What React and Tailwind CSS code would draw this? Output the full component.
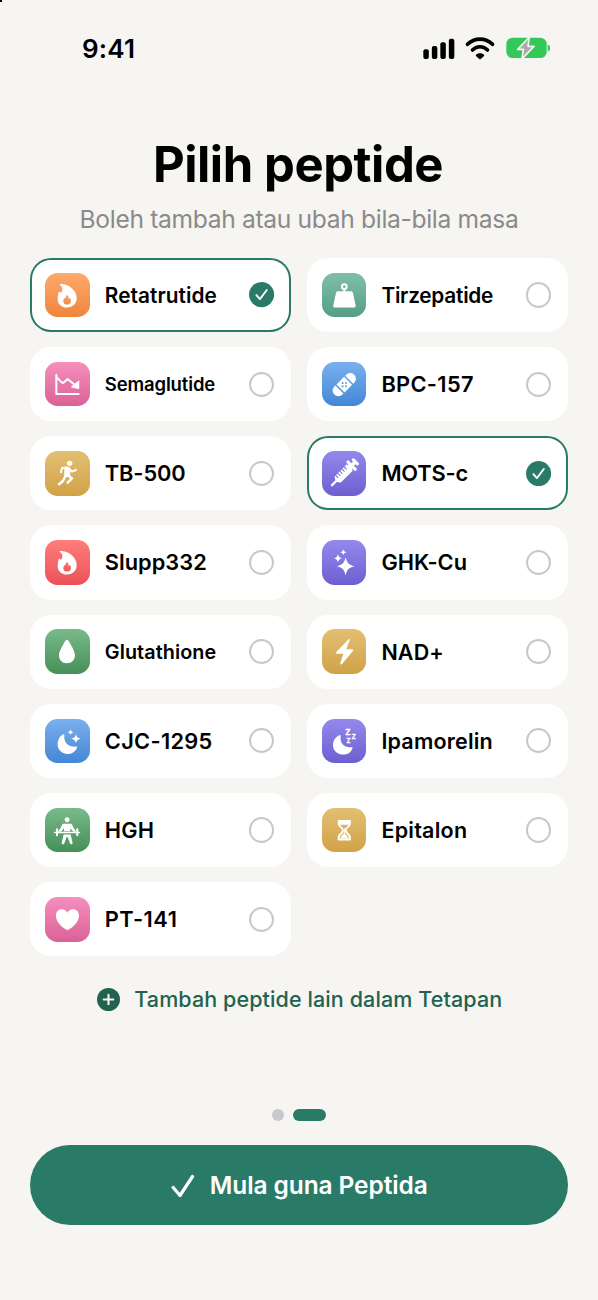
import React, { useState } from 'react';

const star = (cx, cy, r) => {
  const a = r * 0.18;
  const b = r * 0.33;
  return `M${cx} ${cy - r}C${cx + a} ${cy - b} ${cx + b} ${cy - a} ${cx + r} ${cy}C${cx + b} ${cy + a} ${cx + a} ${cy + b} ${cx} ${cy + r}C${cx - a} ${cy + b} ${cx - b} ${cy + a} ${cx - r} ${cy}C${cx - b} ${cy - a} ${cx - a} ${cy - b} ${cx} ${cy - r}Z`;
};

const Flame = () => (
  <path
    fillRule="evenodd"
    d="M46 33C63 32 79 41 88 54C94 63 96 71 95 80C93 95 81 104 66 104C50 104 38 94 38 79C38 70 40 63 41 58C42 55 45 56 48 60C55 51 53 42 45 35C44 34 44 33 46 33ZM64 65C67 75 55 74 55 84C55 91 59 95 66 95C73 95 78 91 78 84C78 79 76 76 74 74C73 77 72 78 70 78C73 72 69 67 64 65Z"
  />
);

const Weight = () => (
  <>
    <circle cx="67" cy="41" r="7" fill="none" stroke="currentColor" strokeWidth="6" />
    <path d="M64 47H70V55H86C90 55 92 57 93 60L101 97C102 101 99 104 95 104H39C35 104 33 101 34 97L42 60C43 57 45 55 49 55H64Z" />
  </>
);

const Chart = () => (
  <>
    <g fill="none" stroke="currentColor" strokeWidth="6" strokeLinecap="round" strokeLinejoin="round">
      <path d="M34 39V96H101" />
      <path d="M36 47L51 62C53 64 55 63 57 61L68 51L90 69" />
    </g>
    <path d="M100 56C102 55 103 56 103 58V78C103 80 102 81 100 81L80 77C78 76 78 74 80 73Z" />
  </>
);

const Bandage = () => (
  <g transform="rotate(-45 67 68)">
    <path
      fillRule="evenodd"
      d="M45 51H46V85H42C32 85 25 77 25 68C25 59 32 51 42 51ZM88 51H92C102 51 109 59 109 68C109 77 102 85 92 85H88ZM51 51H83V85H51Z"
    />
    <g fill="#5d9ce2">
      <circle cx="60" cy="68" r="3" />
      <circle cx="74" cy="68" r="3" />
      <circle cx="67" cy="61" r="3" />
      <circle cx="67" cy="75" r="3" />
    </g>
  </g>
);

const Runner = () => (
  <>
    <circle cx="74" cy="37" r="8" />
    <path d="M58 48C63 45 73 47 74 52L76 69C77 73 74 77 70 78H60C57 77 57 73 58 70Z" />
    <g fill="none" stroke="currentColor" strokeWidth="6" strokeLinecap="round" strokeLinejoin="round">
      <path d="M64 50L51 51L48 64" />
      <path d="M71 51L81 62L93 57" />
      <path strokeWidth="7.5" d="M68 73L81 82L68 95" />
      <path strokeWidth="7.5" d="M61 76L54 90L42 100" />
    </g>
  </>
);

const Syringe = () => (
  <g transform="translate(66 67) rotate(45)">
    <rect x="-13" y="-53" width="26" height="9" rx="3.5" />
    <rect x="-5.5" y="-46" width="11" height="12" />
    <rect x="-20" y="-37" width="40" height="9" rx="4" />
    <path d="M-9 -29H9V-25H13V25C13 28 9 30 5 32L3.5 34V52C3 55 -3 55 -3.5 52V34L-5 32C-9 30 -13 28 -13 25V-25H-9Z" />
    <g stroke="#7a6dda" strokeWidth="3.2" strokeLinecap="round">
      <path d="M-13 -14H-4M-13 -5H-4M-13 4H-4M-13 13H-4M-13 22H-4" />
    </g>
  </g>
);

const Sparkles = () => <path d={`${star(71, 79, 27)}${star(48, 55, 13)}${star(64, 37, 9)}`} />;

const Drop = () => (
  <path d="M66 32C68 32 70 34 71 36C78 48 90 66 90 79C90 94 80 103 66 103C52 103 42 94 42 79C42 66 54 48 61 36C62 34 64 32 66 32Z" />
);

const MoonStars = () => (
  <>
    <path d="M56 46C58 46 59 47 58 49C56 68 67 85 92 83C95 82 98 83 96 87C91 98 81 105 69 105C51 105 38 93 38 76C38 62 45 50 56 46Z" />
    <path d={`${star(77, 40, 9)}${star(93, 59, 14)}`} />
  </>
);

const Bolt = () => (
  <path d="M80 31C82 29 84 31 83 34L73 61H91C94 61 95 64 93 66L60 105C57 108 54 106 55 103L64 74H45C42 74 41 71 43 69Z" />
);

const MoonZzz = () => (
  <>
    <path d="M53 49C56 48 57 49 56 52C53 70 65 87 87 85C91 85 93 86 91 90C86 101 76 107 65 107C46 107 33 95 33 78C33 65 41 53 53 49Z" />
    <g className="font-['Inter',sans-serif] font-bold" stroke="currentColor" strokeWidth="0.8">
      <text x="69.5" y="48" fontSize="24">Z</text>
      <text x="88.5" y="61" fontSize="20">Z</text>
      <text x="73.5" y="71" fontSize="18">Z</text>
    </g>
  </>
);

const Lifter = () => (
  <>
    <circle cx="66.5" cy="35" r="7.5" />
    <path d="M56 47H77C80 47 81 49 82 51L85 58L94 71H85L76 61V70H57V61L48 71H39L48 58L51 51C52 49 53 47 56 47Z" />
    <rect x="27" y="71" width="79" height="4.5" rx="2.2" />
    <rect x="33" y="61" width="6" height="24" rx="3" />
    <rect x="94" y="61" width="6" height="24" rx="3" />
    <path d="M56 80H77L83 105C83 110 76 110 75 106L68 87H65L58 106C57 110 50 110 50 105Z" />
  </>
);

const Heart = () => (
  <path d="M67.5 47C71 41 77 37 84 37C95 37 102 45 102 56C102 73 88 87 73 97C69 100 66 100 62 97C47 87 33 73 33 56C33 45 40 37 51 37C58 37 64 41 67.5 47Z" />
);

const Hourglass = () => (
  <>
    <path
      fillRule="evenodd"
      d="M51 36H83C86 36 87 38 87 41V44C87 57 74 60 74 67C74 74 87 77 87 91V94C87 97 85 98 83 98H51C49 98 47 97 47 94V91C47 77 60 74 60 67C60 60 47 57 47 44V41C47 38 48 36 51 36ZM54 50C58 57 65 59 65 66V70C65 78 54 79 53 92H81C80 79 69 78 69 70V66C69 59 76 57 80 50Z"
    />
    <path d="M65.5 61H68.5V77C70 81 77 83 79 92H55C57 83 64 81 65.5 77Z" />
  </>
);

const COLORS = {
  orange: 'from-[#ffa96c] to-[#ee853c]',
  teal: 'from-[#7fbfa9] to-[#549f85]',
  pink: 'from-[#f58fbd] to-[#db6197]',
  blue: 'from-[#79b0ef] to-[#4387d5]',
  gold: 'from-[#e3bf73] to-[#d1a246]',
  purple: 'from-[#9389ec] to-[#6e5fd1]',
  red: 'from-[#ff7d7d] to-[#eb5157]',
  green: 'from-[#79ba8b] to-[#468f57]',
};

const PEPTIDES = [
  { name: 'Retatrutide', color: 'orange', Icon: Flame, text: 'pt-[2px] text-[20.8px] tracking-[0.06px]' },
  { name: 'Tirzepatide', color: 'teal', Icon: Weight, text: 'pt-[2px] text-[20.8px] tracking-[-0.23px]' },
  { name: 'Semaglutide', color: 'pink', Icon: Chart, text: 'pt-px text-[18.5px] tracking-[-0.14px]' },
  { name: 'BPC-157', color: 'blue', Icon: Bandage, text: 'text-[21.8px] tracking-[0.33px]' },
  { name: 'TB-500', color: 'gold', Icon: Runner, text: 'text-[21.8px] tracking-[-0.1px]' },
  { name: 'MOTS-c', color: 'purple', Icon: Syringe, text: 'text-[21.8px] tracking-[-0.14px]' },
  { name: 'Slupp332', color: 'red', Icon: Flame, text: 'text-[21.8px] tracking-[0.03px]' },
  { name: 'GHK-Cu', color: 'purple', Icon: Sparkles, text: 'text-[21.8px] tracking-[0.02px]' },
  { name: 'Glutathione', color: 'green', Icon: Drop, text: 'pt-[2px] text-[19.8px] tracking-[0.07px]' },
  { name: 'NAD+', color: 'gold', Icon: Bolt, text: 'text-[21.5px] tracking-[0.15px]' },
  { name: 'CJC-1295', color: 'blue', Icon: MoonStars, text: 'text-[21.8px] tracking-[0.3px]' },
  { name: 'Ipamorelin', color: 'purple', Icon: MoonZzz, text: 'text-[21.5px] tracking-[0.2px]' },
  { name: 'HGH', color: 'green', Icon: Lifter, text: 'text-[21.8px] tracking-[0.2px]' },
  { name: 'Epitalon', color: 'gold', Icon: Hourglass, text: 'text-[21.5px] tracking-[0.24px]' },
  { name: 'PT-141', color: 'pink', Icon: Heart, text: 'text-[21.8px] tracking-[0.5px]' },
];

function PeptideCard({ item, selected, onToggle }) {
  const { name, color, Icon, text } = item;
  return (
    <button
      type="button"
      role="checkbox"
      aria-checked={selected}
      onClick={onToggle}
      className={`flex h-[74.3px] items-center rounded-[21px] bg-white pr-[17px] pl-[15px] text-left ${
        selected ? 'inset-ring-2 inset-ring-[#297b68]' : ''
      }`}
    >
      <span className={`flex size-[44.6px] shrink-0 overflow-hidden rounded-[12.5px] bg-linear-to-b text-white ${COLORS[color]}`}>
        <svg viewBox="0 0 134 134" fill="currentColor" className="size-full">
          <Icon />
        </svg>
      </span>
      <span className={`ml-[15.2px] whitespace-nowrap font-semibold text-black ${text}`}>{name}</span>
      {selected ? (
        <svg viewBox="0 0 75 75" className="ml-auto size-[25.2px] shrink-0">
          <circle cx="37.5" cy="37.5" r="37.5" fill="#297b68" />
          <path d="M22 39L32.5 51L53 24" fill="none" stroke="#fff" strokeWidth="5.5" strokeLinecap="round" strokeLinejoin="round" />
        </svg>
      ) : (
        <span className="ml-auto size-[25.2px] shrink-0 rounded-full border-2 border-[#c7c7cc]" />
      )}
    </button>
  );
}

function StatusBar() {
  return (
    <header className="flex h-24 items-center justify-between pr-[48px] pl-[82px]">
      <span className="text-[26px] font-semibold tracking-[0.2px]">9:41</span>
      <svg viewBox="0 0 390 72" className="h-6 w-[130px]">
        <g>
          <rect x="10" y="40" width="16.5" height="29" rx="6" />
          <rect x="35.5" y="30" width="16.5" height="39" rx="6" />
          <rect x="61" y="19" width="16.5" height="50" rx="6" />
          <rect x="86.5" y="8" width="16.5" height="61" rx="6" />
        </g>
        <g fill="none" stroke="#000" strokeWidth="11" strokeLinecap="round">
          <path d="M142.5 25C163 4 197 4 217.500 25" />
          <path d="M157.5 42C169.5 29 190.5 29 202.500 42" />
        </g>
        <path d="M168 56C174 50 186 50 192 56C193 57 193 59 192 60L183 68C181 70 179 70 177 68L168 60C167 59 167 57 168 56Z" />
        <rect x="259" y="5" width="121" height="61" rx="19" fill="#34c759" />
        <path d="M383 26C393 27 393 45 383 46Z" fill="#34c759" />
        <path
          d="M328 3L293 40H310L306 69L342 31H324Z"
          fill="#aeaaac"
          stroke="#f6f5f1"
          strokeWidth="5"
          strokeLinejoin="round"
        />
      </svg>
    </header>
  );
}

export default function App() {
  const [selected, setSelected] = useState(['Retatrutide', 'MOTS-c']);
  const toggle = (name) =>
    setSelected((s) => (s.includes(name) ? s.filter((n) => n !== name) : [...s, name]));

  return (
    <div className="relative flex h-[1300px] w-[598px] flex-col bg-[#f6f5f1] font-['Inter','Noto_Sans',sans-serif] text-black">
      <span className="absolute top-0 left-0 size-[1.5px] bg-black" />
      <StatusBar />
      <h1 className="mt-[38.5px] pr-[2px] text-center text-[49px] leading-[60px] font-bold tracking-[-0.44px]">Pilih peptide</h1>
      <p className="mt-[9.5px] text-center text-[24.6px] leading-[30px] tracking-[-0.33px] text-[#8a8a8b]">
        Boleh tambah atau ubah bila-bila masa
      </p>
      <main className="mt-[23.8px] grid grid-cols-[261.2px_261.4px] justify-between gap-y-[14.9px] px-[30px]">
        {PEPTIDES.map((item) => (
          <PeptideCard
            key={item.name}
            item={item}
            selected={selected.includes(item.name)}
            onToggle={() => toggle(item.name)}
          />
        ))}
      </main>
      <button
        type="button"
        className="mt-[28px] flex h-[30px] items-center justify-center gap-[14.500px] pl-px text-[21.5px] font-medium tracking-[0.1px] whitespace-nowrap text-[#23624f]"
      >
        <svg viewBox="0 0 24 24" className="size-[23px]">
          <circle cx="12" cy="12" r="12" fill="#23624f" />
          <path d="M12 7V17M7 12H17" stroke="#f6f5f1" strokeWidth="2.2" strokeLinecap="round" />
        </svg>
        Tambah peptide lain dalam Tetapan
      </button>
      <footer className="mt-auto px-[30px] pb-[75px]">
        <div className="flex justify-center gap-[9px]">
          <span className="size-3 rounded-full bg-[#c7c7cc]" />
          <span className="h-3 w-[33px] rounded-full bg-[#297b68]" />
        </div>
        <button
          type="button"
          className="mt-6 flex h-[80px] w-full items-center justify-center gap-[14.500px] rounded-full bg-[#297b68] pt-px pl-px text-[24.5px] font-semibold tracking-[-0.1px] text-white"
        >
          <svg viewBox="0 0 24 24" className="size-6">
            <path d="M2.2 13.5L9 21.5L21.5 2.5" fill="none" stroke="currentColor" strokeWidth="3.2" strokeLinecap="round" strokeLinejoin="round" />
          </svg>
          Mula guna Peptida
        </button>
      </footer>
    </div>
  );
}
